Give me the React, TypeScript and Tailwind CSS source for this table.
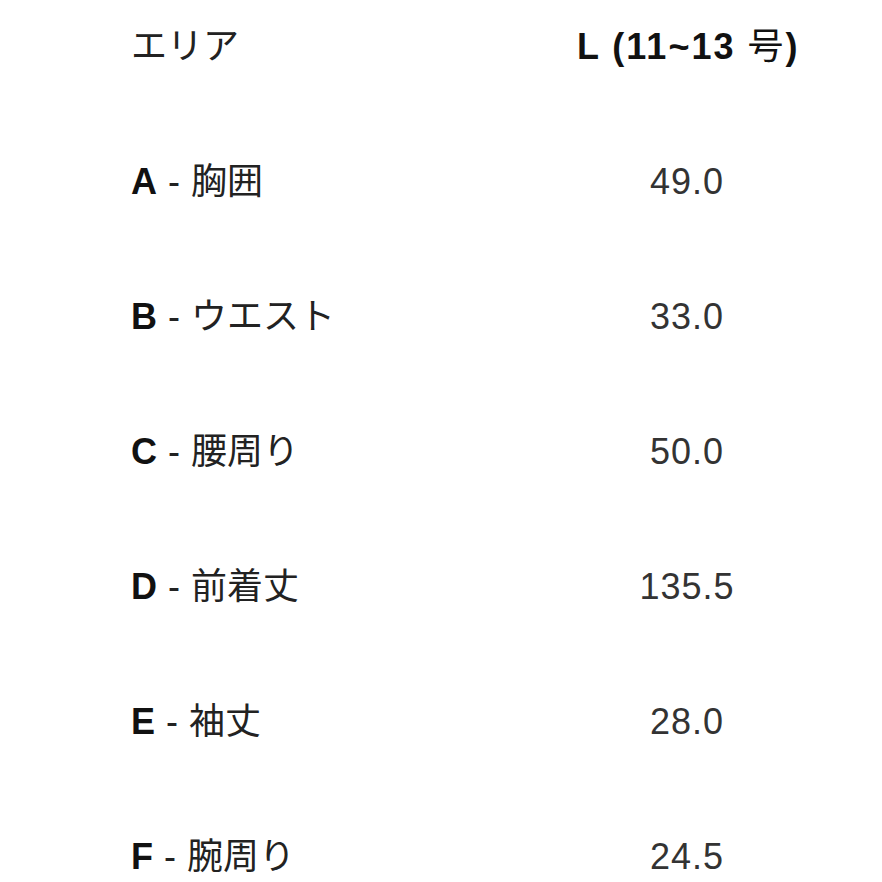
const rows = [
  { key: "A", label: "胸囲", value: "49.0" },
  { key: "B", label: "ウエスト", value: "33.0" },
  { key: "C", label: "腰周り", value: "50.0" },
  { key: "D", label: "前着丈", value: "135.5" },
  { key: "E", label: "袖丈", value: "28.0" },
  { key: "F", label: "腕周り", value: "24.5" },
];

export default function App() {
  return (
    <div
      className="h-[882px] w-[882px] overflow-hidden bg-white pl-[131px] pt-[20px] text-[36px] text-[#1f1f1f]"
      style={{ fontFamily: '"Liberation Sans", "Noto Sans CJK JP", sans-serif' }}
    >
      <div className="flex flex-col gap-[95px]">
        <div className="grid h-[40px] grid-cols-[446px_220px] items-center">
          <span className="text-[#222]">エリア</span>
          <span className="text-center font-bold tracking-[2px] whitespace-nowrap text-[#111]">
            L (11~13 <span className="font-normal">号</span>)
          </span>
        </div>
        {rows.map((row) => (
          <div key={row.key} className="grid h-[40px] grid-cols-[446px_220px] items-center">
            <span className="whitespace-nowrap text-[#222]">
              <span className="font-bold text-[#111]">{row.key}</span>
              <span className="px-[1px]"> - </span>
              {row.label}
            </span>
            <span className="text-center tracking-[1px] text-[#333]">{row.value}</span>
          </div>
        ))}
      </div>
    </div>
  );
}
